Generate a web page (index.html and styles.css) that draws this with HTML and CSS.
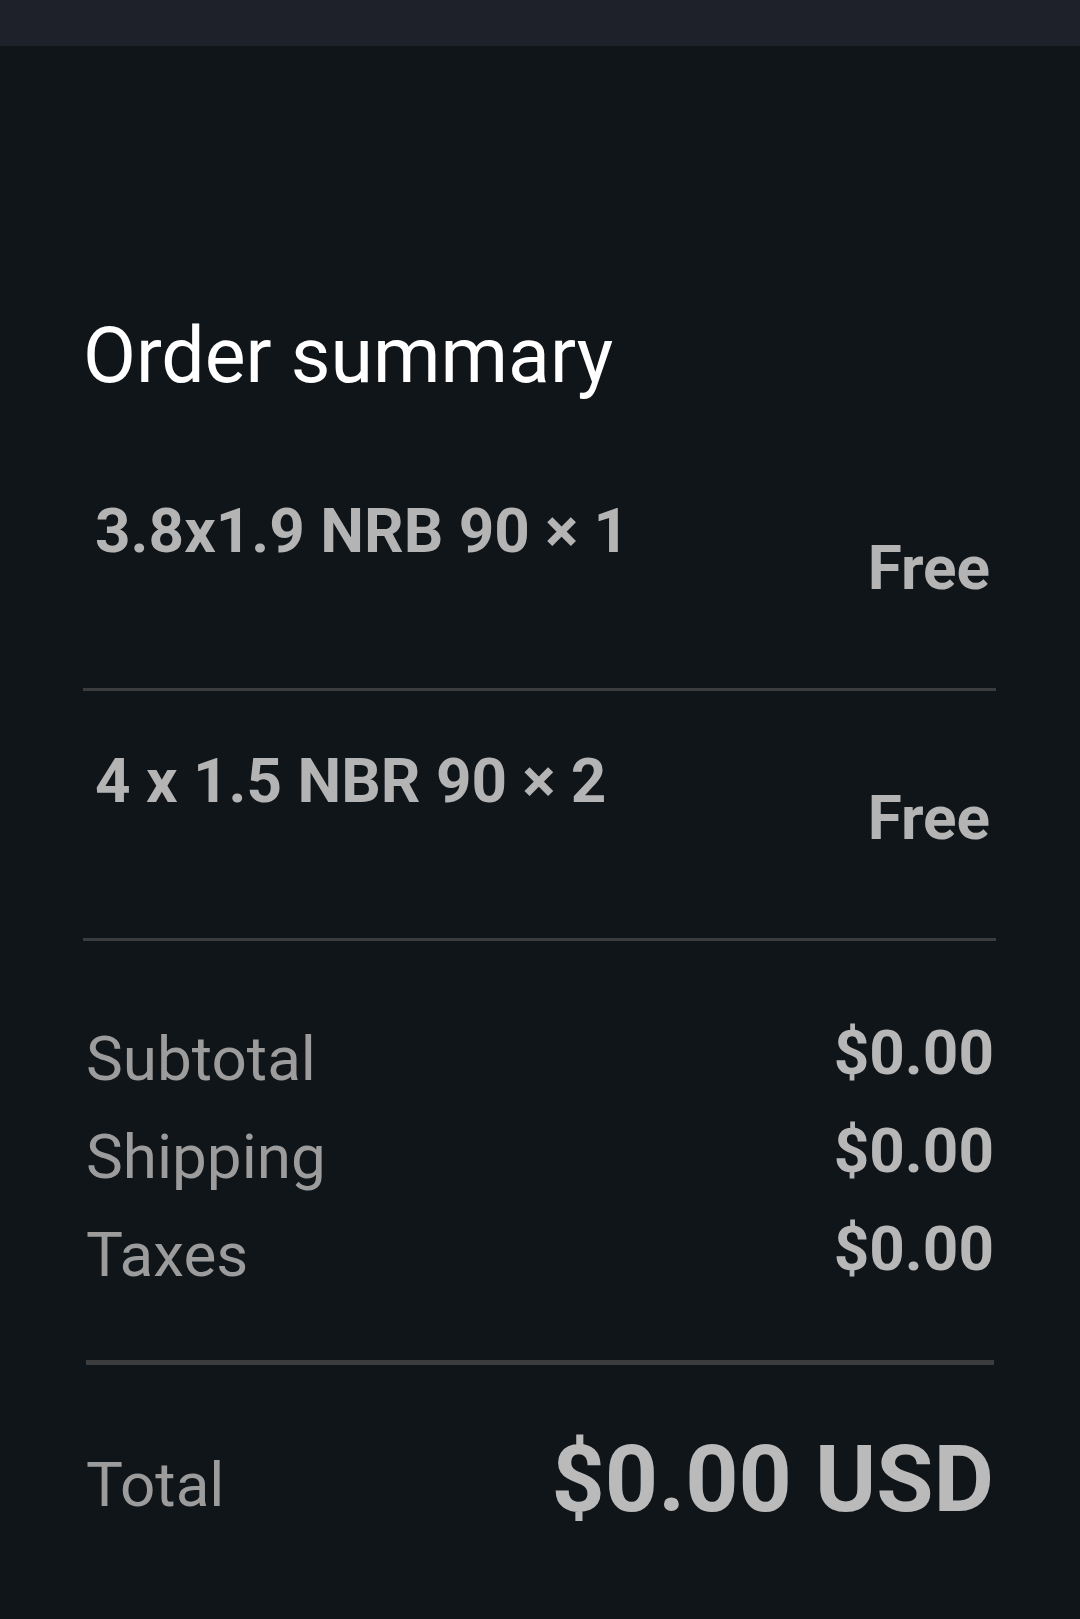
FILE: index.html
```html
<!DOCTYPE html>
<html lang="en">
<head>
<meta charset="utf-8">
<title>Order summary</title>
<link rel="stylesheet" href="styles.css">
</head>
<body>
<div class="topbar"></div>
<main class="summary">
  <h1 class="title">Order summary</h1>
  <ul class="items">
    <li class="item">
      <span class="item-name">3.8x1.9 NRB 90 × 1</span>
      <span class="item-price">Free</span>
    </li>
    <li class="item">
      <span class="item-name">4 x 1.5 NBR 90 × 2</span>
      <span class="item-price">Free</span>
    </li>
  </ul>
  <div class="totals">
    <div class="row"><span class="label">Subtotal</span><span class="value">$0.00</span></div>
    <div class="row"><span class="label">Shipping</span><span class="value">$0.00</span></div>
    <div class="row"><span class="label">Taxes</span><span class="value">$0.00</span></div>
  </div>
  <div class="grand">
    <span class="grand-label">Total</span>
    <span class="grand-value">$0.00 USD</span>
  </div>
</main>
</body>
</html>
```

FILE: styles.css
```css
html, body {
  margin: 0;
  padding: 0;
  background: #10151a;
}
body {
  font-family: Roboto, "Liberation Sans", sans-serif;
  min-height: 1619px;
}
.topbar {
  height: 46px;
  background: #1e202a;
}
.summary {
  padding: 0 0 0 83px;
  width: 913px;
}
.title {
  margin: 272px 0 46px 0;
  font-size: 77px;
  line-height: 1;
  font-weight: 400;
  color: #ffffff;
}
.items {
  list-style: none;
  margin: 0;
  padding: 0;
}
.item {
  display: flex;
  justify-content: space-between;
  align-items: flex-start;
  padding: 59px 6px 89px 12px;
  border-bottom: 3px solid #3b3c3e;
  font-size: 62px;
  line-height: 1;
  font-weight: 700;
  color: #b4b4b4;
}
.item-price {
  margin-top: 37px;
}
.totals {
  margin: 81px 2px 0 3px;
  padding: 0 0 74px 0;
  display: flex;
  flex-direction: column;
  gap: 30px;
  border-bottom: 5px solid #3b3c3e;
}
.row {
  display: flex;
  justify-content: space-between;
  align-items: flex-start;
  font-size: 62px;
  line-height: 1;
}
.label {
  margin-top: 6px;
  color: #9c9c9c;
  font-weight: 400;
}
.value {
  color: #b7b7b7;
  font-weight: 700;
}
.grand {
  margin: 68px 2px 0 3px;
  display: flex;
  justify-content: space-between;
  align-items: flex-start;
  line-height: 1;
}
.grand-label {
  margin-top: 21px;
  font-size: 62px;
  color: #9c9c9c;
}
.grand-value {
  font-size: 93px;
  font-weight: 700;
  color: #bababa;
}
```
